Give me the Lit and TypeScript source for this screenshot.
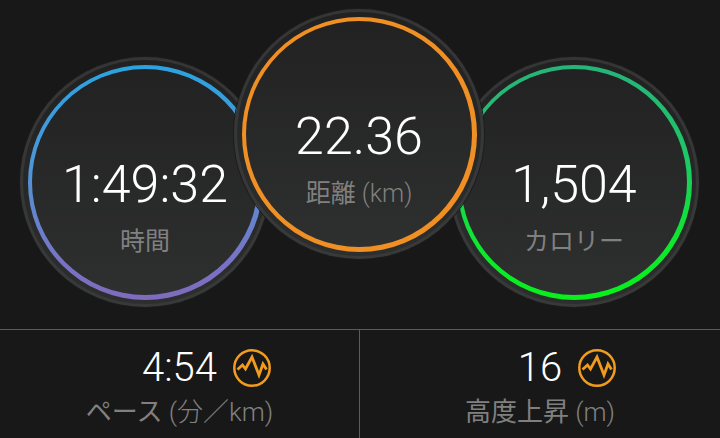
import { LitElement, html, css } from 'lit';
import { customElement } from 'lit/decorators.js';

const RINGS = [
  { value: '1:49:32', label: '時間', unit: '', cls: 'side time' },
  { value: '22.36', label: '距離', unit: ' (km)', cls: 'mid dist' },
  { value: '1,504', label: 'カロリー', unit: '', cls: 'side cal' }
];

const STATS = [
  { value: '4:54', label: 'ペース', unit: ' (分／km)' },
  { value: '16', label: '高度上昇', unit: ' (m)' }
];

const pulseIcon = html`
  <svg class="pulse" viewBox="0 0 38 38" width="38" height="38">
    <circle cx="19" cy="19" r="17.7" fill="none" stroke="#f29c1f" stroke-width="2.5"></circle>
    <path d="M4.5 20.5 L9.5 16 L12.5 20 L19 8 L26 26 L30 15 L33.5 20.5"
      fill="none" stroke="#f29c1f" stroke-width="2.8" stroke-linejoin="miter"></path>
  </svg>
`;

@customElement('app-root')
export class AppRoot extends LitElement {
  static styles = css`
    :host {
      display: block;
      width: 720px;
      height: 438px;
      overflow: hidden;
      background: #181818;
      font-family: Roboto, 'Noto Sans CJK JP', sans-serif;
    }
    .rings {
      height: 329px;
      box-sizing: border-box;
      padding: 9px 0 0 20px;
      display: flex;
      align-items: flex-start;
    }
    .circle {
      flex: none;
      box-sizing: border-box;
      width: 250px;
      height: 250px;
      padding: 3px;
      border-radius: 50%;
      background: linear-gradient(#353535, #383939);
      box-shadow: 0 0 0 1px #1c1c1c;
    }
    .side {
      margin-top: 48px;
    }
    .mid {
      position: relative;
      z-index: 1;
      margin: 0 -35px 0 -36px;
    }
    .gap {
      height: 100%;
      box-sizing: border-box;
      padding: 4.5px;
      border-radius: 50%;
      background: linear-gradient(#212121, #2d2e2e);
    }
    .ring {
      height: 100%;
      box-sizing: border-box;
      padding: 4.5px;
      border-radius: 50%;
    }
    .time .ring {
      background: linear-gradient(#2ba3e0 0%, #4f95d8 45%, #7a72c4 85%, #7f6bbd 100%);
    }
    .dist .ring {
      background: #f08f24;
    }
    .cal .ring {
      background: linear-gradient(#25b47a 0%, #1fc765 40%, #0ee82e 75%, #08f01c 100%);
    }
    .face {
      height: 100%;
      box-sizing: border-box;
      padding-top: 50px;
      border-radius: 50%;
      background: linear-gradient(#222222, #2e2f2f);
      display: flex;
      flex-direction: column;
      align-items: center;
      justify-content: center;
    }
    .value {
      color: #fff;
      font-weight: 300;
      font-size: 52px;
      line-height: 58px;
    }
    .label {
      color: #808080;
      font-size: 25px;
      line-height: 32px;
      margin-top: 12px;
      white-space: pre;
    }
    .unit {
      font-weight: 300;
    }
    .stats {
      height: 109px;
      display: grid;
      grid-template-columns: 359px 1fr;
      border-top: 1px solid #5c5c5c;
    }
    .stat {
      padding-top: 16px;
      display: flex;
      flex-direction: column;
      align-items: center;
    }
    .stat + .stat {
      border-left: 1px solid #5c5c5c;
    }
    .stat-top {
      width: 100%;
      display: grid;
      grid-template-columns: 1fr auto 1fr;
      align-items: center;
      column-gap: 16px;
    }
    .stat-value {
      grid-column: 2;
      color: #fff;
      font-weight: 300;
      font-size: 40px;
      line-height: 44px;
    }
    .pulse {
      display: block;
    }
    .stat-label {
      color: #808080;
      font-size: 26px;
      line-height: 32px;
      margin-top: 6px;
      white-space: pre;
    }
  `;

  render() {
    return html`
      <div class="rings">
        ${RINGS.map(r => html`
          <div class="circle ${r.cls}">
            <div class="gap">
              <div class="ring">
                <div class="face">
                  <div class="value">${r.value}</div>
                  <div class="label">${r.label}<span class="unit">${r.unit}</span></div>
                </div>
              </div>
            </div>
          </div>
        `)}
      </div>
      <div class="stats">
        ${STATS.map(s => html`
          <div class="stat">
            <div class="stat-top">
              <div class="stat-value">${s.value}</div>
              ${pulseIcon}
            </div>
            <div class="stat-label">${s.label}<span class="unit">${s.unit}</span></div>
          </div>
        `)}
      </div>
    `;
  }
}
